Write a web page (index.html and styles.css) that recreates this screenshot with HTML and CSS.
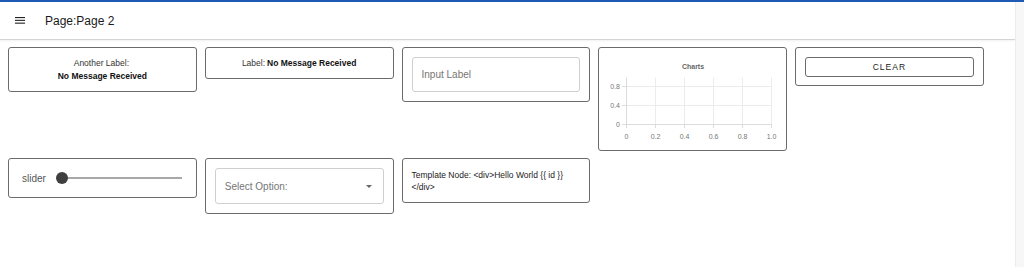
FILE: index.html
```html
<!DOCTYPE html>
<html lang="en">
<head>
    <meta charset="UTF-8">
    <meta name="viewport" content="width=device-width, initial-scale=1.0">
    <title>Page 2</title>
    <link rel="stylesheet" href="styles.css">
</head>
<body>

<div class="app">
    <div class="main">
        <header class="topbar">
            <button class="menu-btn" aria-label="menu">
                <svg width="10" height="7" viewBox="0 0 10 7">
                    <rect x="0" y="0" width="10" height="1.1" fill="#222"/>
                    <rect x="0" y="2.8" width="10" height="1.1" fill="#222"/>
                    <rect x="0" y="5.6" width="10" height="1.1" fill="#222"/>
                </svg>
            </button>
            <span class="page-title">Page:Page 2</span>
        </header>

        <div class="grid">
            <div class="card card-text">
                <div class="label">Another Label:</div>
                <div class="value">No Message Received</div>
            </div>

            <div class="card card-text">
                <div><span class="label">Label:</span><span class="value">No Message Received</span></div>
            </div>

            <div class="card card-field">
                <div class="field">Input Label</div>
            </div>

            <div class="card card-chart">
                <svg width="187" height="102" viewBox="0 0 187 102">
                    <text x="94" y="20.5" class="chart-title" text-anchor="middle">Charts</text>
                    <!-- grid -->
                    <g stroke="#ececec" stroke-width="1">
                        <line x1="56.5" y1="29.5" x2="56.5" y2="76"/>
                        <line x1="85.5" y1="29.5" x2="85.5" y2="76"/>
                        <line x1="114.5" y1="29.5" x2="114.5" y2="76"/>
                        <line x1="143.5" y1="29.5" x2="143.5" y2="76"/>
                        <line x1="172.5" y1="29.5" x2="172.5" y2="76"/>
                        <line x1="27" y1="38.5" x2="173" y2="38.5"/>
                        <line x1="27" y1="57.5" x2="173" y2="57.5"/>
                    </g>
                    <!-- axes and ticks -->
                    <g stroke="#dcdcdc" stroke-width="1">
                        <line x1="27.5" y1="29.5" x2="27.5" y2="80"/>
                        <line x1="23" y1="76.5" x2="173" y2="76.5"/>
                        <line x1="23" y1="38.5" x2="27" y2="38.5"/>
                        <line x1="23" y1="57.5" x2="27" y2="57.5"/>
                        <line x1="56.5" y1="76" x2="56.5" y2="80"/>
                        <line x1="85.5" y1="76" x2="85.5" y2="80"/>
                        <line x1="114.5" y1="76" x2="114.5" y2="80"/>
                        <line x1="143.5" y1="76" x2="143.5" y2="80"/>
                        <line x1="172.5" y1="76" x2="172.5" y2="80"/>
                    </g>
                    <g class="tick" text-anchor="end">
                        <text x="21" y="41">0.8</text>
                        <text x="21" y="60">0.4</text>
                        <text x="21" y="79">0</text>
                    </g>
                    <g class="tick" text-anchor="middle">
                        <text x="27.5" y="90.5">0</text>
                        <text x="56.5" y="90.5">0.2</text>
                        <text x="85.5" y="90.5">0.4</text>
                        <text x="114.5" y="90.5">0.6</text>
                        <text x="143.5" y="90.5">0.8</text>
                        <text x="172.5" y="90.5">1.0</text>
                    </g>
                </svg>
            </div>

            <div class="card">
                <button class="clear-btn">Clear</button>
            </div>

            <div class="card card-slider">
                <span class="slider-label">slider</span>
                <div class="slider">
                    <div class="slider-thumb"></div>
                </div>
            </div>

            <div class="card card-field">
                <div class="field field-select">
                    <span>Select Option:</span>
                    <span class="caret"></span>
                </div>
            </div>

            <div class="card card-template">
                Template Node: &lt;div&gt;Hello World {{ id }}<br>&lt;/div&gt;
            </div>
        </div>
    </div>
    <div class="side"></div>
</div>

</body>
</html>
```

FILE: styles.css
```css
/* page layout */
body {
    margin: 0;
    font-family: 'Liberation Sans', Arial, sans-serif;
    background-color: #fff;
    color: #222;
}

.app {
    display: flex;
    height: 267px;
    border-top: 2px solid #1d5bb6;
    box-sizing: border-box;
}

.main {
    width: 1015px;
    flex-shrink: 0;
}

.side {
    flex: 1;
    background-color: #f7f7f7;
    border-left: 1px solid #ececec;
}

.topbar {
    height: 37px;
    display: flex;
    align-items: center;
    border-bottom: 1px solid #d4d4d4;
    box-shadow: 0 1px 2px rgba(0, 0, 0, 0.06);
}

.menu-btn {
    background: none;
    border: none;
    padding: 0;
    margin-left: 15px;
    width: 10px;
    height: 7px;
    display: flex;
}

.page-title {
    margin-left: 20px;
    font-size: 12px;
    color: #1a1a1a;
}

/* cards */
.grid {
    display: grid;
    grid-template-columns: repeat(5, 188.75px);
    column-gap: 8px;
    row-gap: 7px;
    align-items: start;
    padding: 7px 8px;
}

.card {
    border: 1px solid #6b6b6b;
    border-radius: 3px;
    padding: 9px 9px 8px;
    box-sizing: border-box;
}

.card-field {
    padding-bottom: 9px;
}

.card-text {
    text-align: center;
    font-size: 8.5px;
    line-height: 13px;
}

.card-text .label {
    color: #333;
    margin-right: 2px;
}

.card-text .value {
    font-weight: bold;
    color: #111;
}

.field {
    height: 35px;
    border: 1px solid #cfcfcf;
    border-radius: 3px;
    box-sizing: border-box;
    display: flex;
    align-items: center;
    padding: 0 9px;
    font-size: 10px;
    color: #757575;
}

.field-select {
    height: 36px;
    justify-content: space-between;
}

.caret {
    width: 0;
    height: 0;
    border-left: 3px solid transparent;
    border-right: 3px solid transparent;
    border-top: 3px solid #666;
    margin-right: 2px;
}

.card-chart {
    padding: 0;
    height: 104px;
}

.card-chart svg {
    display: block;
}

.chart-title {
    font-size: 7px;
    font-weight: bold;
    fill: #666;
}

.tick {
    font-size: 7px;
    fill: #777;
}

.clear-btn {
    display: block;
    width: 100%;
    height: 20px;
    background: #fff;
    border: 1px solid #6b6b6b;
    border-radius: 3px;
    font-family: inherit;
    font-size: 8.5px;
    letter-spacing: 1px;
    text-transform: uppercase;
    color: #222;
    padding: 0;
}

.card-slider {
    display: flex;
    align-items: center;
    height: 40px;
    padding: 0 14px 0 13px;
}

.slider-label {
    font-size: 10px;
    color: #555;
    width: 26px;
}

.slider {
    flex: 1;
    height: 2px;
    background-color: #a8a8a8;
    margin-left: 14px;
    position: relative;
}

.slider-thumb {
    position: absolute;
    left: -6px;
    top: -5px;
    width: 12px;
    height: 12px;
    border-radius: 50%;
    background-color: #3f3f3f;
}

.card-template {
    font-size: 8.5px;
    line-height: 12px;
    color: #222;
    padding-top: 10px;
    padding-bottom: 9px;
}
```
